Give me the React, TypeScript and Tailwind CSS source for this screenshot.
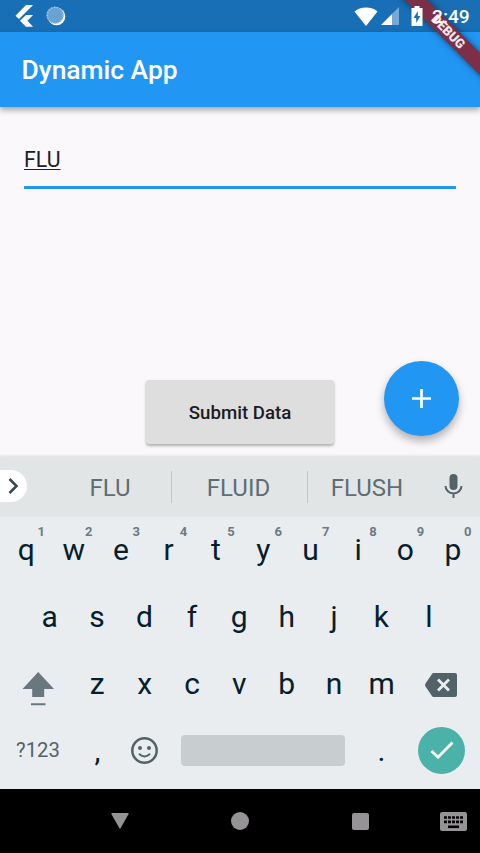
import React from "react";

const ROW_ONE = ["q", "w", "e", "r", "t", "y", "u", "i", "o", "p"];
const ROW_TWO = ["a", "s", "d", "f", "g", "h", "j", "k", "l"];
const ROW_THREE = ["z", "x", "c", "v", "b", "n", "m"];

function Key({ label, hint }: { label: string; hint?: string }) {
  return (
    <div className="relative flex w-[47.4px] shrink-0 items-center justify-center text-[30px] text-[#06202b]">
      {label}
      {hint && (
        <span className="absolute top-[8px] left-[35px] text-[13px] leading-4 font-bold text-[#6d7a81]">{hint}</span>
      )}
    </div>
  );
}

function StatusBar() {
  return (
    <div className="flex h-8 items-center bg-[#196fb5] text-white">
      <svg className="ml-[15px] h-[22px] w-[18px] shrink-0" viewBox="0 0 18 22" fill="currentColor">
        <path d="M11 0h7L4 14 .5 10.700zM11 10h7l-5.500 5.700L18 21.800h-7l-6-6z" />
      </svg>
      <svg className="ml-[13px] h-5 w-5 shrink-0" viewBox="0 0 20 20">
        <circle cx="10.500" cy="10.500" r="8.800" fill="#fff" />
        <circle cx="9" cy="9" r="8.600" fill="#6aa3d3" />
        <circle cx="9.300" cy="9.300" r="8" fill="none" stroke="#a3c6e4" strokeWidth="1.300" strokeDasharray="1.500 1.500" />
      </svg>
      <svg className="ml-[288px] h-[19px] w-6 shrink-0" viewBox="0 0 24 19" fill="currentColor">
        <path d="M12 19 .5 4.500C3.500 2 7.500.5 12 .5s8.500 1.500 11.500 4z" />
      </svg>
      <svg className="ml-[3px] h-[18px] w-[18px] shrink-0" viewBox="0 0 18 18">
        <path d="M0 18 11 7V18z" fill="#fff" />
        <path d="M11 7 18 0v18h-7z" fill="#76a9d3" />
      </svg>
      <svg className="relative z-20 ml-[12px] h-5 w-3 shrink-0" viewBox="0 0 12 20">
        <path d="M3.500 0h5v2H11.500v18H.5V2h3z" fill="#fff" />
        <path d="M6.800 5v5h2.600L5.200 17v-5H2.600z" fill="#196fb5" />
      </svg>
      <div className="relative z-20 ml-[9px] text-[19.2px] leading-[23px] font-medium text-white">2:49</div>
    </div>
  );
}

function DebugRibbon() {
  return (
    <div className="absolute top-0 right-0 z-10 h-[100px] w-[100px] overflow-hidden">
      <div className="absolute top-[24px] left-[-12px] flex h-4 w-[160px] rotate-45 items-center justify-center bg-[#7b3048] text-[13px] leading-4 font-black text-white/90 shadow-[0_0_6px_rgba(0,0,0,0.5)]">
        DEBUG
      </div>
    </div>
  );
}

function SuggestionBar() {
  return (
    <div className="flex h-[59px] items-center bg-[#e1e5e6] text-2xl text-[#5f6d74] shadow-[0_-1px_3px_rgba(0,0,0,0.12)]">
      <div className="mb-px flex h-8 w-[27px] items-center rounded-r-full bg-white">
        <svg className="ml-[8px] h-4 w-[11px]" viewBox="0 0 11 16" fill="none" stroke="#3b4a52" strokeWidth="2.600">
          <path d="m1.500 1 7 7-7 7" />
        </svg>
      </div>
      <div className="ml-[22px] w-[122px] pt-[2px] text-center">FLU</div>
      <div className="h-8 w-px bg-[#bfc5c8]" />
      <div className="w-[135px] pt-[2px] pr-[2px] text-center">FLUID</div>
      <div className="h-8 w-px bg-[#bfc5c8]" />
      <div className="w-[119px] pt-[2px] pr-[1px] text-center">FLUSH</div>
      <svg className="ml-[17px] h-[25px] w-[19px]" viewBox="0 0 19 25">
        <rect x="5.500" y="0" width="8" height="16" rx="4" fill="#536169" />
        <path d="M1.500 12a8 7.500 0 0 0 16 0M9.500 19.500V24" fill="none" stroke="#536169" strokeWidth="2" />
      </svg>
    </div>
  );
}

function Keyboard() {
  return (
    <div className="h-[332px] bg-[#e9edf0]">
      <SuggestionBar />
      <div className="flex h-[67px] pl-[2.6px]">
        {ROW_ONE.map((k, i) => (
          <Key key={k} label={k} hint={String((i + 1) % 10)} />
        ))}
      </div>
      <div className="flex h-[67px] pl-[26px]">
        {ROW_TWO.map((k) => (
          <Key key={k} label={k} />
        ))}
      </div>
      <div className="flex h-[67px] items-stretch">
        <div className="flex w-[73.5px] shrink-0 items-center">
          <svg className="mt-[10px] ml-[22px] h-[34px] w-8" viewBox="0 0 32 34" fill="#6b777e">
            <path d="M16.200 0 32 17h-9.800v8H10.200v-8H.5zM9 31.200h14.500v2H9z" />
          </svg>
        </div>
        {ROW_THREE.map((k) => (
          <Key key={k} label={k} />
        ))}
        <div className="flex flex-1 items-center">
          <svg className="mt-[3px] ml-[20px] h-6 w-8" viewBox="0 0 32 24">
            <path d="M8.500 0H30q2 0 2 2v20q0 2-2 2H8.500Q7.500 24 7 23L.5 13.500q-.8-1.500 0-3L7 1Q7.500 0 8.500 0z" fill="#536169" />
            <path d="m13 6.500 11 11m0-11-11 11" stroke="#e9edf0" strokeWidth="2.800" />
          </svg>
        </div>
      </div>
      <div className="flex h-[66px] items-center">
        <div className="w-[76px] pt-[1px] text-center text-[20.3px] text-[#536169]">?123</div>
        <div className="w-[43px] text-center text-[30px] text-[#06202b]">,</div>
        <svg className="ml-3 h-[27px] w-[27px]" viewBox="0 0 27 27" fill="none" stroke="#536169">
          <circle cx="13.500" cy="13.500" r="12.200" strokeWidth="2.500" />
          <circle cx="9" cy="11" r="2" fill="#536169" stroke="none" />
          <circle cx="18" cy="11" r="2" fill="#536169" stroke="none" />
          <path d="M8.500 17.300q5 4.400 10 0" strokeWidth="2" strokeLinecap="round" />
        </svg>
        <div className="ml-[23px] h-[31px] w-[164px] rounded bg-[#c8cdd0]" />
        <div className="w-[73px] text-center text-[30px] text-[#06202b]">.</div>
        <div className="flex h-[47px] w-[47px] items-center justify-center rounded-full bg-[#4bb2a9]">
          <svg className="h-[18px] w-6" viewBox="0 0 24 18" fill="none" stroke="#fff" strokeWidth="2.800">
            <path d="m1.500 10 6.500 6.200L22.500 1.500" />
          </svg>
        </div>
      </div>
    </div>
  );
}

function NavigationBar() {
  return (
    <div className="flex h-16 items-center bg-black text-[#969397]">
      <svg className="ml-[111px] h-4 w-[18px]" viewBox="0 0 18 16" fill="currentColor">
        <path d="M1 0h16q1 0 .6 1L9.700 15q-.7 1-1.400 0L.4 1Q0 0 1 0z" />
      </svg>
      <div className="ml-[102px] h-[18px] w-[18px] rounded-full bg-[#969397]" />
      <div className="ml-[103px] h-[17px] w-[17px] rounded-[2px] bg-[#969397]" />
      <svg className="ml-[71px] h-[19px] w-[27px]" viewBox="0 0 27 19">
        <rect width="27" height="19" rx="2" fill="#969397" />
        <path d="M4 5.500h19M4 9.800h19" stroke="#000" strokeWidth="2.700" strokeDasharray="2.900 1.120" />
        <path d="M8 14.800h11" stroke="#000" strokeWidth="2.600" />
      </svg>
    </div>
  );
}

export default function App() {
  return (
    <div className="relative flex h-[853px] w-[480px] flex-col overflow-hidden bg-[#faf8fb] font-['Roboto',sans-serif]">
      <StatusBar />
      <header className="flex h-[75px] items-center bg-[#2196f3] pt-[3px] pl-[21.5px] text-[26.4px] font-medium text-white shadow-[0_3px_6px_rgba(0,0,0,0.35)]">
        Dynamic App
      </header>
      <main className="flex flex-1 flex-col">
        <div className="mx-6 mt-[38px] h-[44px] border-b-[3px] border-[#2196f3] text-[21.3px] leading-[30px] text-[#202022]">
          <span className="underline decoration-1 underline-offset-2">FLU</span>
        </div>
        <div className="mt-auto mb-[13px] ml-[146px] flex items-end">
          <button className="h-16 w-[188px] rounded-[3px] bg-[#dedede] pt-px text-[18.67px] font-medium text-[#1c1c1e] shadow-[0_2px_3px_rgba(0,0,0,0.3)]">
            Submit Data
          </button>
          <button className="mb-[8px] ml-[50px] flex h-[75px] w-[75px] items-center justify-center rounded-full bg-[#2196f3] shadow-[0_5px_9px_rgba(0,0,0,0.3)]">
            <svg className="h-[19px] w-[19px]" viewBox="0 0 19 19" stroke="#fff" strokeWidth="2.700">
              <path d="M9.500 0v19M0 9.500h19" />
            </svg>
          </button>
        </div>
      </main>
      <Keyboard />
      <NavigationBar />
      <DebugRibbon />
    </div>
  );
}
